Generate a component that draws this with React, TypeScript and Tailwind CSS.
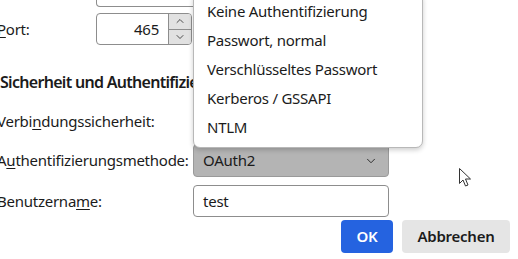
import { ChevronDown, ChevronUp } from 'lucide-react';

const items = ['Keine Authentifizierung', 'Passwort, normal', 'Verschlüsseltes Passwort', 'Kerberos / GSSAPI', 'NTLM'];

export default function App() {
  return (
    <div className="relative w-[518px] h-[259px] overflow-hidden bg-white font-['Noto_Sans',sans-serif] text-[15px] tracking-[-0.25px] text-[#1b1b1b]">
      {/* Rest eines Eingabefelds oben */}
      <div className="ml-[96px] h-[7px] w-[320px] border border-t-0 border-[#8d8d8d] rounded-b-[4px]" />

      <div className="ml-[-3px]">
        {/* Port */}
        <div className="flex items-center mt-[6px] h-[32px]">
          <label className="w-[99px]"><span className="underline underline-offset-2">P</span>ort:</label>
          <div className="flex h-[32px] w-[96px] border border-[#8d8d8d] rounded-[4px] overflow-hidden">
            <div className="flex-1 flex items-center justify-end pr-[9px]">465</div>
            <div className="flex flex-col w-[23px] border-l border-[#8d8d8d]">
              <div className="flex-1 flex items-center justify-center bg-[#e1e1e1] border-b border-[#8d8d8d]">
                <ChevronUp size={12} strokeWidth={1.5} />
              </div>
              <div className="flex-1 flex items-center justify-center bg-[#e1e1e1]">
                <ChevronDown size={12} strokeWidth={1.5} />
              </div>
            </div>
          </div>
        </div>

        {/* Überschrift */}
        <h2 className="ml-[3px] mt-[26px] text-[16px] tracking-[-0.7px] font-semibold leading-[22px] whitespace-nowrap">
          Sicherheit und Authentifizierung
        </h2>

        <div className="flex items-center h-[33px] mt-[12px]">
          <label className="w-[196px]">Verbi<span className="underline underline-offset-2">n</span>dungssicherheit:</label>
          <div className="h-[33px] w-[196px] border border-[#8d8d8d] rounded-[4px]" />
        </div>

        <div className="flex items-center h-[33px] mt-[6px]">
          <label className="w-[196px]">A<span className="underline underline-offset-2">u</span>thentifizierungsmethode:</label>
          <div className="flex items-center justify-between h-[33px] w-[196px] px-[9px] bg-[#b4b4b4] border border-[#9a9a9a] rounded-[4px]">
            <span>OAuth2</span>
            <ChevronDown size={14} strokeWidth={1.5} className="mr-[1px]" />
          </div>
        </div>

        <div className="flex items-center h-[32px] mt-[8px]">
          <label className="w-[196px]">Benutzerna<span className="underline underline-offset-2">m</span>e:</label>
          <div className="flex items-center h-[32px] w-[196px] px-[9px] border border-[#8d8d8d] rounded-[4px]">test</div>
        </div>
      </div>

      <div className="flex justify-end gap-[9px] mr-[8px] mt-[3px]">
        <button className="h-[33px] w-[52px] rounded-[4px] bg-[#2563e0] text-white font-semibold">OK</button>
        <button className="h-[33px] w-[108px] rounded-[4px] bg-[#e5e5e5] font-semibold">Abbrechen</button>
      </div>

      {/* Aufgeklapptes Auswahlmenü */}
      <div className="absolute left-[193px] top-[-4px] w-[230px] pb-[5px] bg-white border border-[#b8b8b8] rounded-b-[7px] shadow-[0_2px_5px_rgba(0,0,0,0.2)]">
        {items.map((it) => (
          <div key={it} className="h-[29px] flex items-center pl-[13px] whitespace-nowrap">{it}</div>
        ))}
      </div>

      {/* Mauszeiger */}
      <svg className="absolute left-[459px] top-[168px]" width="13" height="20" viewBox="0 0 13 20">
        <path d="M0.5 0.5 L0.5 15.5 L4 12 L6.5 18 L9 17 L6.5 11 L11.5 11 Z" fill="white" stroke="#333" strokeWidth="1" strokeLinejoin="round" />
      </svg>
    </div>
  );
}
